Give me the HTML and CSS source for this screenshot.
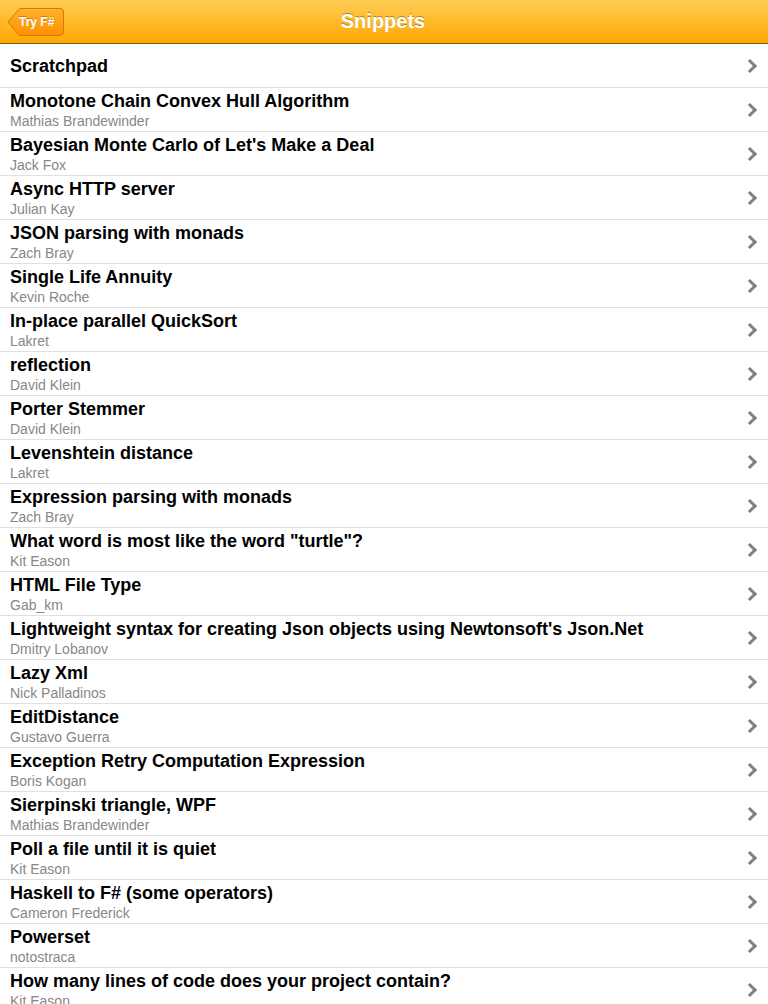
FILE: index.html
```html
<!DOCTYPE html>
<html>
<head>
<meta charset="utf-8">
<link rel="stylesheet" href="styles.css">
</head>
<body>
<header class="navbar">
  <a class="back">
    <svg class="back-shape" viewBox="0 0 58 30" width="58" height="30">
      <defs>
        <linearGradient id="bg" x1="0" y1="0" x2="0" y2="1">
          <stop offset="0" stop-color="#ffb22a"/>
          <stop offset="1" stop-color="#ff9000"/>
        </linearGradient>
      </defs>
      <path d="M0.8 15 L12.5 1.5 H53 Q56.5 1.5 56.5 5 V25 Q56.5 28.5 53 28.5 H12.5 Z" fill="url(#bg)" stroke="#c97f10" stroke-width="1"/>
    </svg>
    <span class="back-label">Try F#</span>
  </a>
  <h1 class="nav-title">Snippets</h1>
</header>
<ul class="list">
  <li class="row single"><div class="text"><div class="title">Scratchpad</div></div><span class="chev"></span></li>
  <li class="row"><div class="text"><div class="title">Monotone Chain Convex Hull Algorithm</div><div class="sub">Mathias Brandewinder</div></div><span class="chev"></span></li>
  <li class="row"><div class="text"><div class="title">Bayesian Monte Carlo of Let's Make a Deal</div><div class="sub">Jack Fox</div></div><span class="chev"></span></li>
  <li class="row"><div class="text"><div class="title">Async HTTP server</div><div class="sub">Julian Kay</div></div><span class="chev"></span></li>
  <li class="row"><div class="text"><div class="title">JSON parsing with monads</div><div class="sub">Zach Bray</div></div><span class="chev"></span></li>
  <li class="row"><div class="text"><div class="title">Single Life Annuity</div><div class="sub">Kevin Roche</div></div><span class="chev"></span></li>
  <li class="row"><div class="text"><div class="title">In-place parallel QuickSort</div><div class="sub">Lakret</div></div><span class="chev"></span></li>
  <li class="row"><div class="text"><div class="title">reflection</div><div class="sub">David Klein</div></div><span class="chev"></span></li>
  <li class="row"><div class="text"><div class="title">Porter Stemmer</div><div class="sub">David Klein</div></div><span class="chev"></span></li>
  <li class="row"><div class="text"><div class="title">Levenshtein distance</div><div class="sub">Lakret</div></div><span class="chev"></span></li>
  <li class="row"><div class="text"><div class="title">Expression parsing with monads</div><div class="sub">Zach Bray</div></div><span class="chev"></span></li>
  <li class="row"><div class="text"><div class="title">What word is most like the word "turtle"?</div><div class="sub">Kit Eason</div></div><span class="chev"></span></li>
  <li class="row"><div class="text"><div class="title">HTML File Type</div><div class="sub">Gab_km</div></div><span class="chev"></span></li>
  <li class="row"><div class="text"><div class="title">Lightweight syntax for creating Json objects using Newtonsoft's Json.Net</div><div class="sub">Dmitry Lobanov</div></div><span class="chev"></span></li>
  <li class="row"><div class="text"><div class="title">Lazy Xml</div><div class="sub">Nick Palladinos</div></div><span class="chev"></span></li>
  <li class="row"><div class="text"><div class="title">EditDistance</div><div class="sub">Gustavo Guerra</div></div><span class="chev"></span></li>
  <li class="row"><div class="text"><div class="title">Exception Retry Computation Expression</div><div class="sub">Boris Kogan</div></div><span class="chev"></span></li>
  <li class="row"><div class="text"><div class="title">Sierpinski triangle, WPF</div><div class="sub">Mathias Brandewinder</div></div><span class="chev"></span></li>
  <li class="row"><div class="text"><div class="title">Poll a file until it is quiet</div><div class="sub">Kit Eason</div></div><span class="chev"></span></li>
  <li class="row"><div class="text"><div class="title">Haskell to F# (some operators)</div><div class="sub">Cameron Frederick</div></div><span class="chev"></span></li>
  <li class="row"><div class="text"><div class="title">Powerset</div><div class="sub">notostraca</div></div><span class="chev"></span></li>
  <li class="row"><div class="text"><div class="title">How many lines of code does your project contain?</div><div class="sub">Kit Eason</div></div><span class="chev"></span></li>
</ul>
</body>
</html>
```

FILE: styles.css
```css
html, body {
  margin: 0;
  padding: 0;
}
body {
  width: 768px;
  height: 1004px;
  overflow: hidden;
  background: #ffffff;
  font-family: "Liberation Sans", Arial, Helvetica, sans-serif;
}
.navbar {
  height: 43px;
  border-bottom: 1px solid #7d5a12;
  background: linear-gradient(to bottom, #ffcd55 0%, #ffb92a 50%, #ffa800 100%);
  display: flex;
  align-items: center;
  justify-content: center;
  position: relative;
}
.back {
  position: absolute;
  left: 7px;
  top: 7px;
  width: 58px;
  height: 30px;
  display: flex;
  align-items: center;
}
.back-shape {
  position: absolute;
  left: 0;
  top: 0;
}
.back-label {
  position: relative;
  margin-left: 12px;
  color: #ffffff;
  font-weight: bold;
  font-size: 12px;
  text-shadow: 0 -1px 0 rgba(120, 70, 0, 0.45);
}
.nav-title {
  margin: 0 0 0 -2px;
  color: #ffffff;
  font-size: 20px;
  font-weight: bold;
  text-shadow: 0 -1px 0 rgba(110, 80, 20, 0.55);
}
.list {
  list-style: none;
  margin: 0;
  padding: 0;
}
.row {
  height: 43px;
  border-bottom: 1px solid #e0e0e0;
  display: flex;
  align-items: center;
  padding: 0 10px;
}
.text {
  flex: 1;
  display: flex;
  flex-direction: column;
  align-self: flex-start;
  padding-top: 2px;
}
.single .text {
  align-self: center;
  padding-top: 0;
}
.title {
  font-size: 18px;
  font-weight: bold;
  color: #000000;
  line-height: 22px;
}
.sub {
  font-size: 14px;
  color: #878787;
  line-height: 17px;
  margin-top: 1px;
}
.chev {
  width: 7px;
  height: 7px;
  border-right: 3px solid #7f7f7f;
  border-top: 3px solid #7f7f7f;
  transform: rotate(45deg);
  margin-right: 3px;
}
```
